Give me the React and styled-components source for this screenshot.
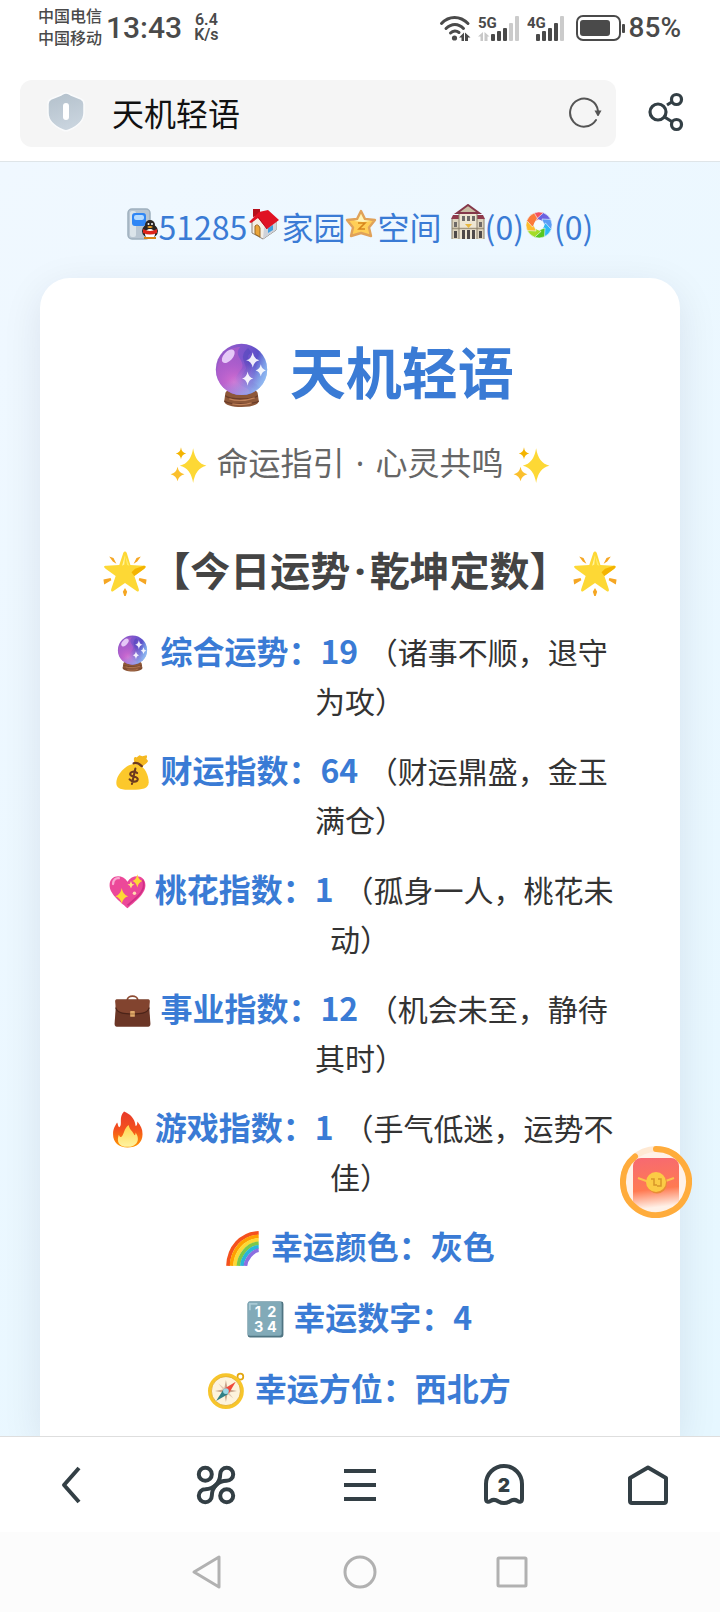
import React from 'react';
import styled, { createGlobalStyle } from 'styled-components';

const GlobalStyle = createGlobalStyle`
  * {
    box-sizing: border-box;
  }

  body {
    margin: 0;
    background: #ffffff;
    font-family: 'Noto Sans CJK SC', 'Noto Sans', sans-serif;
    color: #333333;
  }

  svg {
    display: block;
    flex: none;
  }
`;

const Screen = styled.div`
  min-height: 100vh;
  display: flex;
  flex-direction: column;
`;

/* status bar */

const StatusBar = styled.header`
  height: 56px;
  padding: 0 39px 0 38px;
  display: flex;
  justify-content: space-between;
  align-items: center;
  color: #4a4a4a;
  font-weight: 500;
`;

const StatusGroup = styled.div`
  display: flex;
  align-items: center;
  gap: ${({ $gap }) => $gap}px;
`;

const Carriers = styled.div`
  padding-bottom: 4px;
  font-size: 16px;
  line-height: 22px;
`;

const Clock = styled.time`
  font-family: Roboto, sans-serif;
  font-size: 30px;
  line-height: 32px;
`;

const Speed = styled.div`
  margin-left: 8px;
  padding-bottom: 2px;
  font-family: Roboto, sans-serif;
  font-size: 16px;
  line-height: 15px;
  font-weight: 600;
  text-align: center;
`;

const Percent = styled.span`
  font-family: Roboto, sans-serif;
  font-size: 28px;
  line-height: 32px;
`;

/* address bar */

const AddressBar = styled.form`
  height: 106px;
  padding: 24px 4px 14px 20px;
  display: flex;
  align-items: center;
  border-bottom: 1px solid #dfe5e8;
`;

const AddressBox = styled.div`
  flex: 1;
  height: 67px;
  padding: 0 14px 3px 26px;
  display: flex;
  align-items: center;
  border-radius: 12px;
  background: #f5f5f5;
`;

const AddressInput = styled.input`
  flex: 1;
  min-width: 0;
  margin-left: 26px;
  padding: 0;
  border: 0;
  outline: 0;
  background: none;
  color: #111111;
  font-family: inherit;
  font-size: 32px;
  line-height: 48px;
`;

const IconButton = styled.button`
  width: ${({ $width }) => $width}px;
  padding: 0;
  border: 0;
  background: none;
  display: flex;
  justify-content: center;
  align-items: center;
`;

const ShareButton = styled(IconButton)`
  padding-bottom: 3px;
`;

/* page */

const Content = styled.main`
  flex: 1;
  padding: 38px 40px 0;
  display: flex;
  flex-direction: column;
  overflow: hidden;
  background: linear-gradient(135deg, #f0f8ff, #e6f7ff);
`;

const Links = styled.nav`
  margin-bottom: 26px;
  font-size: 32px;
  line-height: 52px;
  text-align: center;
  white-space: nowrap;

  a {
    color: #3a7bd5;
    text-decoration: none;
  }

  a:nth-child(4) {
    margin-left: 2px;
  }

  svg {
    display: inline-block;
    vertical-align: baseline;
  }
`;

const Card = styled.article`
  flex: 1;
  padding: 47px 60px 0;
  border-radius: 30px 30px 0 0;
  background: #ffffff;
  box-shadow: 0 10px 40px rgba(0, 20, 60, 0.09);
  text-align: center;
`;

const Title = styled.h1`
  margin: 0 0 20px;
  color: #3a7bd5;
  font-size: 56px;
  line-height: 90px;
  font-weight: 700;
`;

const Subtitle = styled.p`
  margin: 0 0 50px;
  color: #666666;
  font-size: 32px;
  line-height: 52px;
`;

const SectionTitle = styled.h2`
  margin: 0 -10px 24px;
  color: #444444;
  font-size: 40px;
  line-height: 64px;
  font-weight: 700;
  white-space: nowrap;
`;

const Dot = styled.span`
  padding: 0 4px;
  font-family: 'Noto Sans', sans-serif;
  line-height: 1;
`;

const Fortune = styled.p`
  margin: 0 0 20px;
  font-size: 30px;
  line-height: 48px;
`;

const Label = styled.strong`
  margin-right: 3px;
  color: #3a7bd5;
  font-size: 32px;
  line-height: 51px;
  font-weight: 700;
`;

const EmojiSvg = styled.svg`
  display: inline-block;
  margin: 0 ${({ $size }) => Math.round($size * 0.05)}px;
  vertical-align: ${({ $size }) => -Math.round($size * 0.22)}px;
`;

const RewardButton = styled.button`
  position: fixed;
  right: 28px;
  bottom: 394px;
  padding: 0;
  border: 0;
  background: none;
  border-radius: 50%;
`;

/* bottom bars */

const Toolbar = styled.nav`
  height: 96px;
  display: grid;
  grid-template-columns: repeat(5, 1fr);
  justify-items: center;
  border-top: 1px solid #dedede;
  background: #ffffff;
`;

const SystemBar = styled.footer`
  height: 80px;
  display: flex;
  justify-content: center;
  background: #fcfcfc;
`;

const Emoji = ({ size, children }) => (
  <EmojiSvg $size={size} width={size} height={size} viewBox="0 0 64 64" aria-hidden="true">
    {children}
  </EmojiSvg>
);

const CrystalBall = ({ size }) => (
  <Emoji size={size}>
    <defs>
      <linearGradient id="ball" x1="0" y1="0.4" x2="1" y2="0.6">
        <stop offset="0" stopColor="#9a5cc9" />
        <stop offset="0.5" stopColor="#7a55cc" />
        <stop offset="0.75" stopColor="#5a50c8" />
        <stop offset="1" stopColor="#7fb2ee" />
      </linearGradient>
      <radialGradient id="ballGlow" cx="0.35" cy="0.75" r="0.5">
        <stop offset="0" stopColor="#d86fd0" />
        <stop offset="1" stopColor="#b45cd0" stopOpacity="0" />
      </radialGradient>
      <linearGradient id="ballEdge" x1="0.5" y1="0.5" x2="0.9" y2="1">
        <stop offset="0" stopColor="#8fb6f2" stopOpacity="0" />
        <stop offset="1" stopColor="#9cc4f5" />
      </linearGradient>
    </defs>
    <path d="M16 50c0-4 7-5 16-5s16 1 16 5l1 7c0 4-8 6-17 6s-17-2-17-6z" fill="#8d5738" />
    <path d="M16 52c5 4 27 4 32 0M15 57c6 4 28 4 34 0" fill="none" stroke="#6b3d29" strokeWidth="1.200" />
    <path d="M20 55c6 2 16 2 25-1M23 60c6 1 13 1 19-1" fill="none" stroke="#c1825a" strokeWidth="1.2" />
    <circle cx="32" cy="26" r="25.3" fill="url(#ball)" />
    <path d="M31 4c-7 7 2 12 2 18s-9 9-5 16 12 5 12 11c-15 6-31-4-32-20C8 14 19 4 31 4z" fill="#b65fc9" opacity="0.65" />
    <path d="M40 7c-8 6-2 12-1 17s-8 8-4 13 10 3 12 8" fill="none" stroke="#4b45ba" strokeWidth="5" opacity="0.5" />
    <circle cx="32" cy="26" r="25.3" fill="url(#ballGlow)" />
    <circle cx="32" cy="26" r="25.3" fill="url(#ballEdge)" />
    <ellipse cx="19" cy="13" rx="8" ry="4.5" transform="rotate(-48 19 13)" fill="#f0dcff" opacity="0.85" />
    <path
      d="M43 9q1.300 7 6.500 8q-5.200 1-6.500 7q-1.300-6-6.500-7q5.200-1 6.500-8zM51 21q1 5 5 6q-4 1-5 6q-1-5-5-6q4-1 5-6zM38 28q1 6 5.500 7q-4.500 1-5.500 7q-1-6-5.500-7q4.500-1 5.500-7z"
      fill="#ffffff"
      opacity="0.9"
    />
  </Emoji>
);

const Sparkles = () => (
  <Emoji size={37}>
    <path d="M40 4q4 26 23 30q-19 4-23 30q-4-26-23-30q19-4 23-30z" fill="#fdd835" />
    <path d="M41 16q2 15 14 18q-12-3-14-18z" fill="#fff59d" />
    <path d="M19 2q1 9 9 11q-8 2-9 10q-1-8-9-10q8-2 9-11z" fill="#f4b400" />
    <path d="M13 36q2 11 12 13q-10 3-12 12q-2-9-12-12q10-2 12-13z" fill="#fbc02d" />
  </Emoji>
);

const GlowingStar = () => (
  <Emoji size={46}>
    <path
      d="M10 9l6 2 4 8-5-3zM54 9l-6 2-4 8 5-3zM2 41l10-2 1 3-10 6zM62 41l-10-2-1 3 10 6zM32 53l3 5-2 6h-2l-2-6z"
      fill="#f5a623"
    />
    <path
      d="M32 2c2 0 2.500 2 3 4l4.500 15 18 1c4 0 4 2 1 4L45 36l6 18c1 3 0 5-3 3L32 46 16 57c-3 2-4 0-3-3l6-18L5 26c-3-2-3-4 1-4l18-1 5-15c.5-2 1-4 3-4z"
      fill="#fdd835"
    />
    <path d="M58 22c3 0 4 2 1 4L45 36l-4-5 5-5z" fill="#f4b400" />
    <path d="M32 7l-4 15 3-2z" fill="#fff59d" />
    <path d="M32 7l3 14 3 1z" fill="#ffee6a" />
  </Emoji>
);

const MoneyBag = () => (
  <Emoji size={37}>
    <path d="M35 14C33 6 36 4 39 6l5-4 5 2 7-2c2 1 1 4 0 6l3 4c-2 4-6 6-9 9z" fill="#f5b921" />
    <path d="M36 17C20 18 4 36 4 50c0 10 9 12 27 12s29-2 29-13c0-13-7-26-16-30z" fill="#fcc82b" />
    <path d="M34 16c5-2 10 1 14 5" stroke="#6d3b1f" strokeWidth="4" strokeLinecap="round" fill="none" />
    <path
      d="M40 33c-4-4-12-3-12 2s14 3 13 9c-1 5-10 5-14 0M37 25l-6 27"
      fill="none"
      stroke="#6d3b1f"
      strokeWidth="3.600"
      strokeLinecap="round"
    />
  </Emoji>
);

const SparklingHeart = () => (
  <Emoji size={37}>
    <path d="M32 61C24 53 1 38 1 21 1 3 23 1 32 15 41 1 63 3 63 21c0 17-23 32-31 40z" fill="#ec4899" />
    <path d="M7 19c0-7 5-11 10-10" stroke="#f9a8d0" strokeWidth="4" strokeLinecap="round" fill="none" />
    <path d="M58 12c9 18-12 32-26 44" stroke="#cf2f86" strokeWidth="3" fill="none" />
    <path
      d="M22 26q2 12 11 14q-9 3-11 13q-2-10-11-13q9-2 11-14zM49 2q2 10 9 12q-7 2-9 11q-2-9-9-11q7-2 9-12z"
      fill="#fdd835"
    />
    <path d="M38 14l2 5 4 1-4 2-2 5-2-5-4-2 4-1z" fill="#ffe57a" />
    <circle cx="44" cy="35" r="3" fill="#ffd9b0" />
  </Emoji>
);

const Briefcase = () => (
  <Emoji size={37}>
    <path d="M23 14c0-9 18-9 18 0" fill="none" stroke="#8d4b32" strokeWidth="3" />
    <path d="M4 13h56l3 42c0 3-1 5-4 5H5c-3 0-4-2-4-5z" fill="#6b3626" />
    <path d="M4 13h56c2 0 2 2 2 4l-1 10c0 4-3 7-7 8-14 4-30 4-44 0-4-1-7-4-7-8L2 17c0-2 0-4 2-4z" fill="#82442f" />
    <path d="M3 27c3 11 17 11 29 11s26 0 29-11" fill="none" stroke="#4b2318" strokeWidth="2" />
    <rect x="28" y="33" width="8" height="10" rx="1" fill="#e0a96a" />
    <path d="M28 38h8" stroke="#9c6a38" strokeWidth="1.500" />
  </Emoji>
);

const Fire = () => (
  <Emoji size={37}>
    <defs>
      <linearGradient id="fire" x1="0" y1="0" x2="0" y2="1">
        <stop offset="0" stopColor="#e8392a" />
        <stop offset="0.5" stopColor="#f4511e" />
        <stop offset="1" stopColor="#ff9800" />
      </linearGradient>
      <linearGradient id="flame" x1="0" y1="0" x2="0" y2="1">
        <stop offset="0" stopColor="#ffd54f" />
        <stop offset="1" stopColor="#fff3a0" />
      </linearGradient>
    </defs>
    <path
      d="M26 1c10 4 19 12 20 25 3-1 3-5 3-8 6 7 9 13 9 22 0 15-11 23-26 23S7 54 7 40c0-10 4-15 7-20 2 3 1 7 4 8 6-4-2-17 8-27z"
      fill="url(#fire)"
    />
    <path
      d="M34 24c2 10 8 11 10 18 2-1 2-3 2-5 9 13 2 25-14 25s-19-10-15-21c1 3 2 4 4 4 6-5 4-14 13-21z"
      fill="url(#flame)"
    />
  </Emoji>
);

const Rainbow = () => (
  <Emoji size={37}>
    <g fill="none" strokeWidth="6.500">
      <path d="M7 62C8 31 29 6 60 5" stroke="#f4511e" />
      <path d="M13 62C14 35 33 12 60 11" stroke="#ffa000" />
      <path d="M19 62C20 39 37 18 60 17" stroke="#fdd835" />
      <path d="M25 62C26 43 41 24 60 23" stroke="#7cc84a" />
      <path d="M31 62C32 47 45 30 60 29" stroke="#29b6d8" />
      <path d="M37 62C38 51 49 36 60 35" stroke="#8b6fe0" />
    </g>
  </Emoji>
);

const Numbers = () => (
  <Emoji size={37}>
    <rect x="1" y="1" width="62" height="62" rx="4" fill="#4f7482" />
    <rect x="1" y="1" width="59" height="59" rx="4" fill="#82aab8" />
    <path d="M5 16V5h13" fill="none" stroke="#a9cad5" strokeWidth="3" />
    <g fill="#ffffff" fontFamily="Inter, sans-serif" fontSize="25" fontWeight="700" textAnchor="middle">
      <text x="19" y="28">1</text>
      <text x="43" y="28">2</text>
      <text x="20" y="54">3</text>
      <text x="43" y="54">4</text>
    </g>
  </Emoji>
);

const Compass = () => (
  <Emoji size={37}>
    <circle cx="56" cy="8" r="5" fill="none" stroke="#e2a610" strokeWidth="3" />
    <circle cx="31" cy="33" r="28" fill="#fdf3dc" stroke="#f7c52b" strokeWidth="6" />
    <circle cx="31" cy="33" r="25" fill="none" stroke="#d69b12" strokeWidth="1" />
    <path d="M31 14l3 16 16 3-16 3-3 16-3-16-16-3 16-3z" fill="#c9a58c" />
    <path d="M18 20l13 10 13-10-10 13 10 13-13-10-13 10 10-13z" fill="#e0c9b3" />
    <path d="M48 17L36 37l-8-8z" fill="#ef4a3c" />
    <path d="M14 50l13-20 8 8z" fill="#2f7f86" />
    <circle cx="31" cy="33" r="5" fill="#9bd8e6" />
  </Emoji>
);

const PhoneIcon = () => (
  <svg width="32" height="32" viewBox="0 0 32 32" aria-hidden="true">
    <rect x="1" y="1" width="22" height="30" rx="4" fill="#b9c6d2" stroke="#9fb0be" strokeWidth="1.500" />
    <rect x="3" y="3" width="6" height="26" rx="2" fill="#dbe4ea" />
    <rect x="5" y="5" width="14" height="13" rx="3" fill="#2f86f5" />
    <rect x="7" y="7" width="10" height="5" rx="2" fill="#b5dbff" />
    <ellipse cx="23" cy="23" rx="8" ry="7" fill="#2a2522" />
    <circle cx="23" cy="17" r="5" fill="#2a2522" />
    <ellipse cx="23" cy="26" rx="5" ry="5" fill="#ffffff" />
    <path d="M16 21q7 4 14 0v4q-7 3-14 0z" fill="#dd2418" />
    <path d="M20 19q3-2 6 0q-3 2-6 0z" fill="#f7a21b" />
    <circle cx="21.500" cy="16" r="1" fill="#fff" />
    <circle cx="25" cy="16" r="1" fill="#fff" />
    <path d="M17 30h12" stroke="#d98212" strokeWidth="2" />
  </svg>
);

const HouseIcon = () => (
  <svg width="34" height="32" viewBox="-1 0 34 32" aria-hidden="true">
    <path d="M4 14v11l11 6 13-9V12L13 6z" fill="#f4efe6" stroke="#8b8178" strokeWidth="1" />
    <path d="M16 20l12-8v10l-13 9z" fill="#cfd3da" />
    <path d="M7 18q3-3 5 2v9l-5-3z" fill="#eaa53a" stroke="#9b6a25" strokeWidth="1" />
    <path d="M20 20l5-3v5l-5 3z" fill="#3f9ee0" />
    <path d="M5 9V1h7v6z" fill="#b5101c" />
    <path d="M1 14L11 4l9-2 11 10-12 9-9-11-7 5z" fill="#e01224" />
    <path d="M10 9l9 12" stroke="#b80d1c" strokeWidth="1" />
  </svg>
);

const StarIcon = () => (
  <svg width="32" height="32" viewBox="0 0 32 32" aria-hidden="true">
    <path
      d="M16 3l4 8L30 12l-6 7.500L26 28l-10-3-10 3 2-8.500L2 12l10-1z"
      fill="#ffcf57"
      stroke="#e0a25a"
      strokeWidth="2.400"
      strokeLinejoin="round"
    />
    <path d="M16 6l3 6 7 1-8 1-9-1 4-1z" fill="#fff4b8" />
    <path d="M13 15h7l-6 6h6" fill="none" stroke="#d8861c" strokeWidth="1.600" />
  </svg>
);

const MansionIcon = () => (
  <svg width="34" height="36" viewBox="0 0 34 36" aria-hidden="true">
    <path d="M1 15h32v20H1z" fill="#ddd3bd" />
    <path d="M8 9h18v26H8z" fill="#eee6d2" />
    <path d="M6 9L17 1l11 8z" fill="#c9bda4" stroke="#85384a" strokeWidth="2" />
    <path d="M0 15l2-4h6v4zM34 15l-2-4h-6v4z" fill="#8f3a4c" />
    <path d="M11 12h3v5h-3zM16 12h3v5h-3zM21 12h3v5h-3zM3 18h3v5H3zM28 18h3v5h-3z" fill="#6f6a68" />
    <path d="M3 27h3v7H3zM11 26h3v9h-3zM16 26h3v9h-3zM21 26h3v9h-3zM28 27h3v7h-3z" fill="#4f4a4a" />
    <path d="M1 24.500h32" stroke="#a2967f" strokeWidth="1.500" />
    <path d="M8 10v25M26 10v25M1 15v20M33 15v20" stroke="#8c806c" strokeWidth="1" />
    <path d="M14 20h7l-3.500 4z" fill="#e8b73f" />
  </svg>
);

const blades = ['#f4515f', '#6b62e0', '#5b9df5', '#30b8f5', '#58c820', '#a4dc28', '#fdbd2c', '#fb7a3a'];

const WheelIcon = () => (
  <svg width="30" height="28" viewBox="-15 -13 30 28" aria-hidden="true">
    {blades.map((color, i) => (
      <path
        key={color}
        d="M-5.500-11.800A13 13 0 0 1 5.200-11.900L3.600-6-6-3z"
        fill={color}
        stroke="#eef8ff"
        strokeWidth="0.600"
        transform={`rotate(${i * 45})`}
      />
    ))}
    <circle r="5" fill="#f4fbff" />
  </svg>
);

const WifiIcon = () => (
  <svg width="32" height="28" viewBox="0 0 32 28" aria-hidden="true">
    <g fill="none" stroke="#4a4a4a" strokeWidth="3" strokeLinecap="round">
      <path d="M2.500 9.500C10 1.500 21 1.500 29 9.500" />
      <path d="M7 14.500c5.500-5.500 12.500-5.500 17.500 0" />
      <path d="M11.500 19c2.500-2.500 6-2.500 8.500-.5" />
    </g>
    <circle cx="15.500" cy="24" r="2.600" fill="#4a4a4a" />
    <path d="M20 23.500l5-5v8.500h-2.500v-3.500zM26 18.500l5.500 5H29v3.500h-3z" fill="#4a4a4a" />
  </svg>
);

// bars: [x, top, active]
const SignalIcon = ({ label, bars, idle }) => (
  <svg width="42" height="28" viewBox="0 0 42 28">
    <text x="0" y="14" fill="#4a4a4a" fontFamily="Roboto, sans-serif" fontSize="15" fontWeight="700">
      {label}
    </text>
    {idle && <path d="M0 22.500l5-4.500v9H2.500v-4.500zM6.500 18l5 4.500H9.500V27h-3z" fill="#c8c8c8" />}
    {bars.map(([x, top, active]) => (
      <rect key={x} x={x} y={top} width="4" height={27 - top} rx="1" fill={active ? '#4a4a4a' : '#cbcbcb'} />
    ))}
  </svg>
);

const BatteryIcon = () => (
  <svg width="50" height="28" viewBox="0 0 50 28" aria-hidden="true">
    <rect x="1" y="2" width="43" height="24" rx="6" fill="none" stroke="#4a4a4a" strokeWidth="2" />
    <rect x="4" y="6" width="30" height="16" rx="3" fill="#4a4a4a" />
    <rect x="46" y="10" width="3" height="9" rx="1" fill="#4a4a4a" />
  </svg>
);

const ShieldIcon = () => (
  <svg width="40" height="42" viewBox="0 0 40 42" aria-hidden="true">
    <defs>
      <linearGradient id="shield" x1="0" y1="0" x2="0.3" y2="1">
        <stop offset="0" stopColor="#b3c0cb" />
        <stop offset="1" stopColor="#c9d4de" />
      </linearGradient>
    </defs>
    <path
      d="M20 2c2 0 3 1 5 2l10 4c2 1 3 2 3 5v9c0 9-8 14-15 17-2 1-4 1-6 0C10 36 2 31 2 22v-9c0-3 1-4 3-5l10-4c2-1 3-2 5-2z"
      fill="url(#shield)"
      stroke="#fafbfc"
      strokeWidth="1.500"
    />
    <rect x="17" y="12" width="6" height="17" rx="3" fill="#ffffff" />
  </svg>
);

const ReloadIcon = () => (
  <svg width="34" height="32" viewBox="0 0 34 32" aria-hidden="true">
    <path d="M28 24A14 14 0 1 1 30 15" fill="none" stroke="#555555" strokeWidth="2" strokeLinecap="round" />
    <path d="M26.500 14.500h7L30.500 20h-1z" fill="#555555" />
  </svg>
);

const ShareIcon = () => (
  <svg width="40" height="40" viewBox="0 0 40 40" aria-hidden="true">
    <g fill="none" stroke="#333f45" strokeWidth="3.200">
      <circle cx="12" cy="20" r="8" />
      <circle cx="30.500" cy="7.500" r="5" />
      <circle cx="30.500" cy="32.500" r="5" />
      <path d="M21 13l5.500-3.500M18.500 25l8 5" />
    </g>
  </svg>
);

const ToolIcon = ({ children }) => (
  <svg
    width="48"
    height="48"
    viewBox="0 0 48 48"
    fill="none"
    stroke="#333f45"
    strokeWidth="4"
    strokeLinejoin="round"
    aria-hidden="true"
  >
    {children}
  </svg>
);

const SystemIcon = ({ children }) => (
  <svg
    width="40"
    height="40"
    viewBox="0 0 40 40"
    fill="none"
    stroke="#b1b1b1"
    strokeWidth="3"
    strokeLinejoin="round"
    aria-hidden="true"
  >
    {children}
  </svg>
);

const RewardIcon = () => (
  <svg width="72" height="72" viewBox="0 0 72 72" aria-hidden="true">
    <defs>
      <linearGradient id="packet" x1="0.4" y1="0" x2="0.5" y2="1">
        <stop offset="0" stopColor="#f76a70" />
        <stop offset="0.6" stopColor="#ff7a52" />
        <stop offset="0.95" stopColor="#fff1e8" />
      </linearGradient>
    </defs>
    <circle cx="36" cy="36" r="36" fill="#ffe9d3" />
    <circle cx="36" cy="36" r="30" fill="#fff1e8" />
    <rect x="13" y="12" width="46" height="52" rx="8" fill="url(#packet)" />
    <path
      d="M36 3A33 33 0 1 1 15 10.500"
      fill="none"
      stroke="#ffac3c"
      strokeWidth="6"
      strokeLinecap="round"
    />
    <path d="M18 32l11 4M54 32l-11 4" stroke="#fbc24e" strokeWidth="2" />
    <circle cx="37" cy="37.500" r="10" fill="#e98c35" />
    <circle cx="36" cy="36" r="10" fill="#fbcb45" />
    <path d="M31 33h3v6h3M38 33h3v7h-4" fill="none" stroke="#d8962a" strokeWidth="1.500" />
  </svg>
);

const fortunes = [
  { icon: <CrystalBall size={37} />, label: '综合运势：19', note: '（诸事不顺，退守为攻）' },
  { icon: <MoneyBag />, label: '财运指数：64', note: '（财运鼎盛，金玉满仓）' },
  { icon: <SparklingHeart />, label: '桃花指数：1', note: '（孤身一人，桃花未动）' },
  { icon: <Briefcase />, label: '事业指数：12', note: '（机会未至，静待其时）' },
  { icon: <Fire />, label: '游戏指数：1', note: '（手气低迷，运势不佳）' },
  { icon: <Rainbow />, label: '幸运颜色：灰色' },
  { icon: <Numbers />, label: '幸运数字：4' },
  { icon: <Compass />, label: '幸运方位：西北方' },
];

const App = () => (
  <Screen>
    <GlobalStyle />
    <StatusBar>
      <StatusGroup $gap={4}>
        <Carriers>
          <div>中国电信</div>
          <div>中国移动</div>
        </Carriers>
        <Clock>13:43</Clock>
        <Speed>
          <div>6.4</div>
          <div>K/s</div>
        </Speed>
      </StatusGroup>
      <StatusGroup $gap={7}>
        <WifiIcon />
        <SignalIcon
          label="5G"
          idle
          bars={[[13, 20, true], [19, 17, true], [25, 14, true], [31, 9, false], [37, 2, false]]}
        />
        <SignalIcon
          label="4G"
          bars={[[9, 20, true], [15, 17, true], [21, 14, true], [27, 9, true], [33, 2, false]]}
        />
        <StatusGroup $gap={3}>
          <BatteryIcon />
          <Percent>85%</Percent>
        </StatusGroup>
      </StatusGroup>
    </StatusBar>

    <AddressBar onSubmit={(e) => e.preventDefault()}>
      <AddressBox>
        <ShieldIcon />
        <AddressInput aria-label="网址" defaultValue="天机轻语" />
        <IconButton type="button" $width={34} aria-label="刷新">
          <ReloadIcon />
        </IconButton>
      </AddressBox>
      <ShareButton type="button" $width={100} aria-label="分享">
        <ShareIcon />
      </ShareButton>
    </AddressBar>

    <Content>
      <Links>
        <a href="#id"><PhoneIcon />51285</a>
        <a href="#home"><HouseIcon />家园</a>
        <a href="#space"><StarIcon />空间</a>{' '}
        <a href="#mansion"><MansionIcon />(0)</a>
        <a href="#moments"><WheelIcon />(0)</a>
      </Links>
      <Card>
        <Title>
          <CrystalBall size={65} /> 天机轻语
        </Title>
        <Subtitle>
          <Sparkles /> 命运指引 <Dot>·</Dot> 心灵共鸣 <Sparkles />
        </Subtitle>
        <SectionTitle>
          <GlowingStar />【今日运势<Dot>·</Dot>乾坤定数】<GlowingStar />
        </SectionTitle>
        {fortunes.map(({ icon, label, note }) => (
          <Fortune key={label}>
            <Label>
              {icon} {label}
            </Label>
            {note && ` ${note}`}
          </Fortune>
        ))}
      </Card>
    </Content>

    <RewardButton type="button" aria-label="红包">
      <RewardIcon />
    </RewardButton>

    <Toolbar>
      <IconButton type="button" $width={96} aria-label="返回">
        <ToolIcon>
          <path d="M31 7L16 24l15 17" />
        </ToolIcon>
      </IconButton>
      <IconButton type="button" $width={96} aria-label="工具">
        <ToolIcon>
          <circle cx="13.300" cy="13.300" r="6.500" />
          <circle cx="34.700" cy="34.700" r="6.500" />
          <path d="M13.300 28.200C22 28 28 22 28.200 13.300a6.500 6.500 0 1 1 6.500 6.500C26 20 20 26 19.800 34.700a6.500 6.500 0 1 1-6.500-6.500z" />
          <path d="M20 28l8-8" />
        </ToolIcon>
      </IconButton>
      <IconButton type="button" $width={96} aria-label="菜单">
        <ToolIcon>
          <path d="M8 10h32M8 24h32M8 38h32" />
        </ToolIcon>
      </IconButton>
      <IconButton type="button" $width={96} aria-label="标签页">
        <ToolIcon>
          <path d="M6 38V23a18 18 0 0 1 36 0v15c0 3-2.500 3.500-4.500 2-3-2-5-1.500-8 .5-4 2.300-7 2.300-11 0-3-2-5-2.500-8-.5-2 1.500-4.500 1-4.500-2z" />
          <text
            x="24"
            y="31"
            fill="#333f45"
            stroke="none"
            fontFamily="Inter, sans-serif"
            fontSize="19"
            fontWeight="900"
            textAnchor="middle"
          >
            2
          </text>
        </ToolIcon>
      </IconButton>
      <IconButton type="button" $width={96} aria-label="主页">
        <ToolIcon>
          <path d="M6 17L24 6.500 42 17v23a2 2 0 0 1-2 2H8a2 2 0 0 1-2-2z" />
        </ToolIcon>
      </IconButton>
    </Toolbar>

    <SystemBar>
      <IconButton type="button" $width={152} aria-label="系统返回">
        <SystemIcon>
          <path d="M6 20L31 5v30z" />
        </SystemIcon>
      </IconButton>
      <IconButton type="button" $width={152} aria-label="系统主屏幕">
        <SystemIcon>
          <circle cx="20" cy="20" r="15" />
        </SystemIcon>
      </IconButton>
      <IconButton type="button" $width={152} aria-label="最近任务">
        <SystemIcon>
          <rect x="6" y="6" width="28" height="28" rx="1" />
        </SystemIcon>
      </IconButton>
    </SystemBar>
  </Screen>
);

export default App;
